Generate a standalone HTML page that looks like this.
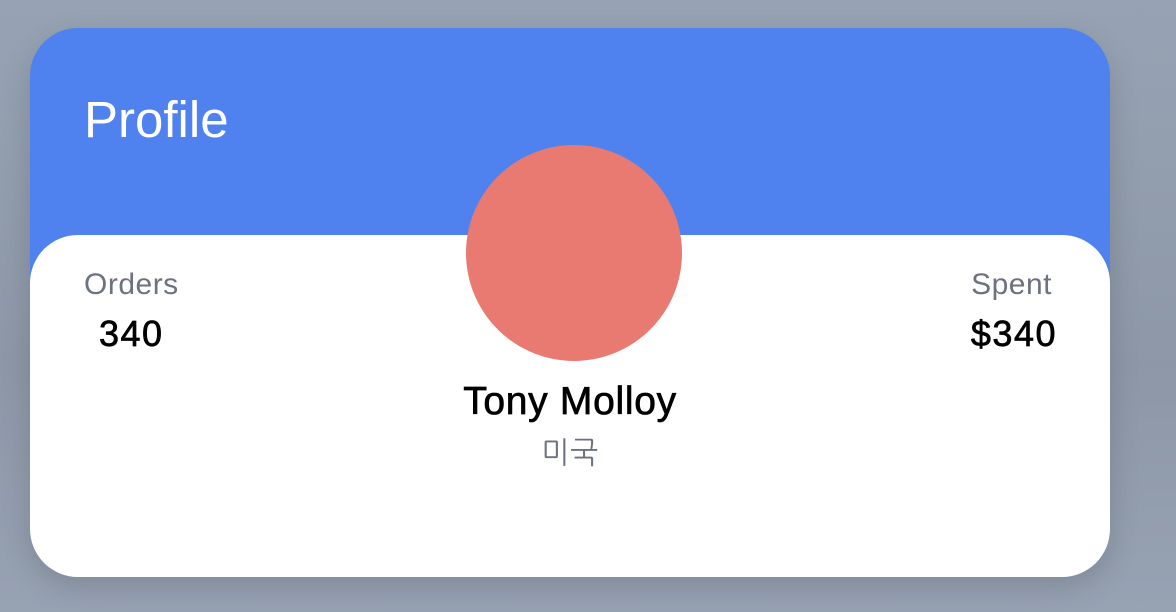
<!DOCTYPE html>
<html><head><style>
html,body{margin:0;padding:0}
body{width:1176px;height:612px;background:linear-gradient(180deg,#97a3b4,#8d97a7 60%,#97a2b3);position:relative;overflow:hidden;font-family:"Liberation Sans","NanumGothic",sans-serif}
.card{position:absolute;left:30px;top:28px;width:1080px;height:549px;border-radius:48px;background:#4f82ee;overflow:hidden;box-shadow:0 10px 30px rgba(0,0,0,.15)}
.white{position:absolute;left:0;top:207px;width:1080px;height:342px;background:#fff;border-radius:48px 48px 0 0}
.t{position:absolute;color:#fff;font-size:51px;left:54px;top:64px;line-height:56px}
.av{position:absolute;left:436px;top:117px;width:216px;height:216px;border-radius:50%;background:#e87a72}
.lab{position:absolute;color:#6b7280;font-size:30px;line-height:32px;letter-spacing:.5px}
.num{position:absolute;color:#000;font-size:36px;line-height:40px;-webkit-text-stroke:.7px #000;letter-spacing:1.5px}
</style></head><body>
<div class="card">
<div class="white"></div>
<div class="t">Profile</div>
<div class="av"></div>
<div class="lab" style="left:54px;top:241px">Orders</div>
<div class="num" style="left:69px;top:286px">340</div>
<div class="lab" style="right:58px;top:241px">Spent</div>
<div class="num" style="right:53px;top:286px">$340</div>
<div class="num" style="left:0;width:1080px;text-align:center;top:354px;font-size:39px;letter-spacing:.7px">Tony Molloy</div>
<div class="lab" style="left:0;width:1080px;text-align:center;top:410px">미국</div>
</div>
</body></html>
